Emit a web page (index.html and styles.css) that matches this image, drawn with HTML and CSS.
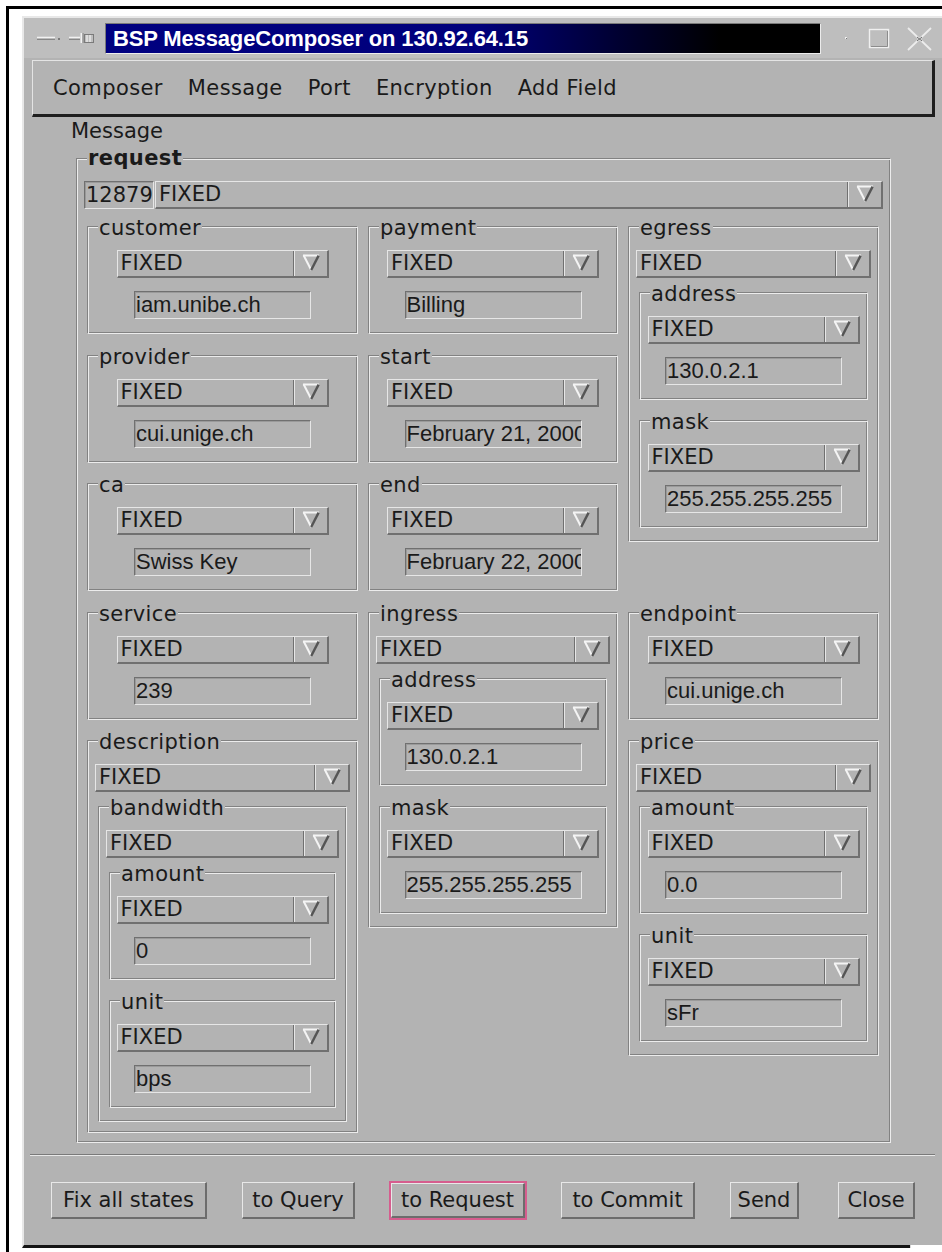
FILE: index.html
```html
<!DOCTYPE html>
<html lang="en">
<head>
<meta charset="utf-8">
<title>BSP MessageComposer</title>
<link rel="stylesheet" href="styles.css">
</head>
<body>
<svg class="defs" width="0" height="0" aria-hidden="true">
  <symbol id="arrow" viewBox="0 0 18 17">
    <path d="M1 1.5H17" stroke="#f4f4f4" stroke-width="2" fill="none"/>
    <path d="M1.6 1.2L9.2 16" stroke="#f4f4f4" stroke-width="2" fill="none"/>
    <path d="M16.6 1.6L9.2 16" stroke="#555" stroke-width="2.4" fill="none"/>
  </symbol>
</svg>
<div class="screen">
 <div class="window">
  <div class="titlebar">
   <svg class="tb-icons" width="58" height="16" viewBox="0 0 58 16">
     <path d="M0 7.5H18" stroke="#f2f2f2" stroke-width="1.6"/>
     <path d="M0 9.3H18" stroke="#7a7a7a" stroke-width="1"/>
     <rect x="21" y="8" width="2" height="2" fill="#7a7a7a"/>
     <path d="M32 7.5H43" stroke="#f2f2f2" stroke-width="1.6"/>
     <path d="M32 9.3H43" stroke="#7a7a7a" stroke-width="1"/>
     <path d="M44.5 3V13" stroke="#f2f2f2" stroke-width="2"/>
     <path d="M46 3V13" stroke="#7a7a7a" stroke-width="1"/>
     <rect x="47.5" y="4.5" width="9" height="8" fill="none" stroke="#7a7a7a" stroke-width="1"/>
     <path d="M50 5V12M53 5V12" stroke="#f2f2f2" stroke-width="1.2"/>
   </svg>
   <div class="tb-title">BSP MessageComposer on 130.92.64.15</div>
   <svg class="tb-controls" width="100" height="26" viewBox="0 0 100 26">
     <rect x="5" y="12" width="2" height="2" fill="#eeeeee"/>
     <rect x="6" y="13" width="1" height="1" fill="#777"/>
     <rect x="29.5" y="4.5" width="19" height="18" fill="none" stroke="#f0f0f0" stroke-width="1.4"/>
     <path d="M47.5 6V21.5H31" fill="none" stroke="#8c8c8c" stroke-width="1"/>
     <path d="M68 3L91 25M91 3L68 25" stroke="#ececec" stroke-width="1.8"/>
     <path d="M77 12L82 16M82 12L77 16" stroke="#6a6a6a" stroke-width="1"/>
   </svg>
  </div>

  <div class="menubar">
   <span>Composer</span>
   <span>Message</span>
   <span>Port</span>
   <span>Encryption</span>
   <span>Add Field</span>
  </div>

  <div class="panel-label">Message</div>

  <div class="group request">
   <span class="legend strong">request</span>
   <div class="req-row">
    <div class="idbox">12879</div>
    <div class="dropdown"><span class="dd-text">FIXED</span><span class="dd-btn"><svg class="arrow" viewBox="0 0 18 17"><use href="#arrow"/></svg></span></div>
   </div>

   <div class="fields-grid">
    <!-- column 1 -->
    <div class="group leaf c1 r1">
     <span class="legend">customer</span>
     <div class="dropdown"><span class="dd-text">FIXED</span><span class="dd-btn"><svg class="arrow" viewBox="0 0 18 17"><use href="#arrow"/></svg></span></div>
     <div class="field">iam.unibe.ch</div>
    </div>
    <div class="group leaf c1 r2">
     <span class="legend">provider</span>
     <div class="dropdown"><span class="dd-text">FIXED</span><span class="dd-btn"><svg class="arrow" viewBox="0 0 18 17"><use href="#arrow"/></svg></span></div>
     <div class="field">cui.unige.ch</div>
    </div>
    <div class="group leaf c1 r3">
     <span class="legend">ca</span>
     <div class="dropdown"><span class="dd-text">FIXED</span><span class="dd-btn"><svg class="arrow" viewBox="0 0 18 17"><use href="#arrow"/></svg></span></div>
     <div class="field">Swiss Key</div>
    </div>
    <div class="group leaf c1 r4">
     <span class="legend">service</span>
     <div class="dropdown"><span class="dd-text">FIXED</span><span class="dd-btn"><svg class="arrow" viewBox="0 0 18 17"><use href="#arrow"/></svg></span></div>
     <div class="field">239</div>
    </div>
    <div class="group box description c1 r5">
     <span class="legend">description</span>
     <div class="dropdown"><span class="dd-text">FIXED</span><span class="dd-btn"><svg class="arrow" viewBox="0 0 18 17"><use href="#arrow"/></svg></span></div>
     <div class="group box sub">
      <span class="legend">bandwidth</span>
      <div class="dropdown"><span class="dd-text">FIXED</span><span class="dd-btn"><svg class="arrow" viewBox="0 0 18 17"><use href="#arrow"/></svg></span></div>
      <div class="group leaf sub">
       <span class="legend">amount</span>
       <div class="dropdown"><span class="dd-text">FIXED</span><span class="dd-btn"><svg class="arrow" viewBox="0 0 18 17"><use href="#arrow"/></svg></span></div>
       <div class="field">0</div>
      </div>
      <div class="group leaf sub next">
       <span class="legend">unit</span>
       <div class="dropdown"><span class="dd-text">FIXED</span><span class="dd-btn"><svg class="arrow" viewBox="0 0 18 17"><use href="#arrow"/></svg></span></div>
       <div class="field">bps</div>
      </div>
     </div>
    </div>

    <!-- column 2 -->
    <div class="group leaf c2 r1">
     <span class="legend">payment</span>
     <div class="dropdown"><span class="dd-text">FIXED</span><span class="dd-btn"><svg class="arrow" viewBox="0 0 18 17"><use href="#arrow"/></svg></span></div>
     <div class="field">Billing</div>
    </div>
    <div class="group leaf c2 r2">
     <span class="legend">start</span>
     <div class="dropdown"><span class="dd-text">FIXED</span><span class="dd-btn"><svg class="arrow" viewBox="0 0 18 17"><use href="#arrow"/></svg></span></div>
     <div class="field">February 21, 2000</div>
    </div>
    <div class="group leaf c2 r3">
     <span class="legend">end</span>
     <div class="dropdown"><span class="dd-text">FIXED</span><span class="dd-btn"><svg class="arrow" viewBox="0 0 18 17"><use href="#arrow"/></svg></span></div>
     <div class="field">February 22, 2000</div>
    </div>
    <div class="group box c2 r4 span2">
     <span class="legend">ingress</span>
     <div class="dropdown"><span class="dd-text">FIXED</span><span class="dd-btn"><svg class="arrow" viewBox="0 0 18 17"><use href="#arrow"/></svg></span></div>
     <div class="group leaf sub">
      <span class="legend">address</span>
      <div class="dropdown"><span class="dd-text">FIXED</span><span class="dd-btn"><svg class="arrow" viewBox="0 0 18 17"><use href="#arrow"/></svg></span></div>
      <div class="field">130.0.2.1</div>
     </div>
     <div class="group leaf sub next">
      <span class="legend">mask</span>
      <div class="dropdown"><span class="dd-text">FIXED</span><span class="dd-btn"><svg class="arrow" viewBox="0 0 18 17"><use href="#arrow"/></svg></span></div>
      <div class="field">255.255.255.255</div>
     </div>
    </div>

    <!-- column 3 -->
    <div class="group box c3 r1 span3">
     <span class="legend">egress</span>
     <div class="dropdown"><span class="dd-text">FIXED</span><span class="dd-btn"><svg class="arrow" viewBox="0 0 18 17"><use href="#arrow"/></svg></span></div>
     <div class="group leaf sub">
      <span class="legend">address</span>
      <div class="dropdown"><span class="dd-text">FIXED</span><span class="dd-btn"><svg class="arrow" viewBox="0 0 18 17"><use href="#arrow"/></svg></span></div>
      <div class="field">130.0.2.1</div>
     </div>
     <div class="group leaf sub next">
      <span class="legend">mask</span>
      <div class="dropdown"><span class="dd-text">FIXED</span><span class="dd-btn"><svg class="arrow" viewBox="0 0 18 17"><use href="#arrow"/></svg></span></div>
      <div class="field">255.255.255.255</div>
     </div>
    </div>
    <div class="group leaf c3 r4">
     <span class="legend">endpoint</span>
     <div class="dropdown"><span class="dd-text">FIXED</span><span class="dd-btn"><svg class="arrow" viewBox="0 0 18 17"><use href="#arrow"/></svg></span></div>
     <div class="field">cui.unige.ch</div>
    </div>
    <div class="group box c3 r5">
     <span class="legend">price</span>
     <div class="dropdown"><span class="dd-text">FIXED</span><span class="dd-btn"><svg class="arrow" viewBox="0 0 18 17"><use href="#arrow"/></svg></span></div>
     <div class="group leaf sub">
      <span class="legend">amount</span>
      <div class="dropdown"><span class="dd-text">FIXED</span><span class="dd-btn"><svg class="arrow" viewBox="0 0 18 17"><use href="#arrow"/></svg></span></div>
      <div class="field">0.0</div>
     </div>
     <div class="group leaf sub next">
      <span class="legend">unit</span>
      <div class="dropdown"><span class="dd-text">FIXED</span><span class="dd-btn"><svg class="arrow" viewBox="0 0 18 17"><use href="#arrow"/></svg></span></div>
      <div class="field">sFr</div>
     </div>
    </div>
   </div>
  </div>

  <div class="separator"></div>

  <div class="buttons">
   <button class="btn b-fix">Fix all states</button>
   <button class="btn b-query">to Query</button>
   <div class="focus-ring"><button class="btn b-request">to Request</button></div>
   <button class="btn b-commit">to Commit</button>
   <button class="btn b-send">Send</button>
   <button class="btn b-close">Close</button>
  </div>

  <div class="corner"></div>
 </div>
</div>
</body>
</html>
```
FILE: styles.css
```css
* { box-sizing: border-box; }

html, body {
  margin: 0;
  padding: 0;
  background: #fff;
}

body {
  width: 942px;
  height: 1252px;
  overflow: hidden;
  font-family: "DejaVu Sans", "Liberation Sans", sans-serif;
  font-size: 21px;
  line-height: 24px;
  color: #1a1a1a;
}

.defs {
  position: absolute;
  width: 0;
  height: 0;
  overflow: hidden;
}

/* desktop frame edge */
.screen {
  margin: 6px 0 0 6px;
  height: 1246px;
  border-top: 3px solid #000;
  border-left: 3px solid #000;
  padding: 7px 0 0 13px;
}

.window {
  position: relative;
  width: 920px;
  height: 1232px;
  background: #b3b3b3;
  border-top: 2px solid #e8e8e8;
  border-left: 2px solid #e8e8e8;
  border-bottom: 3px solid #151515;
  display: flex;
  flex-direction: column;
}

/* ---- title bar ---- */
.titlebar {
  flex: none;
  height: 40px;
  background: #bebebe;
  display: flex;
  align-items: center;
}

.tb-icons {
  flex: none;
  margin-left: 13px;
}

.tb-title {
  flex: none;
  align-self: flex-start;
  margin: 5px 0 0 10px;
  width: 716px;
  height: 31px;
  padding-left: 7px;
  border: 1px solid;
  border-color: #7a7a7a #ececec #ececec #7a7a7a;
  background: linear-gradient(90deg, #000080 0%, #00007c 52%, #000030 72%, #000 86%, #000 100%);
  color: #fff;
  font-family: "Liberation Sans", Arial, sans-serif;
  font-weight: bold;
  font-size: 22px;
  letter-spacing: -0.15px;
  line-height: 29px;
  white-space: nowrap;
}

.tb-controls {
  flex: none;
  margin-left: 19px;
}

/* ---- menu bar ---- */
.menubar {
  flex: none;
  height: 57px;
  margin: 2px 7px 0 8px;
  padding-left: 20px;
  display: flex;
  align-items: center;
  gap: 25px;
  border-style: solid;
  border-width: 1px 3px 3px 1px;
  border-color: #e4e4e4 #1e1e1e #1e1e1e #e4e4e4;
  letter-spacing: 0.4px;
}

.panel-label {
  margin: 2px 0 0 47px;
  line-height: 24px;
}

/* ---- etched group boxes ---- */
.group {
  display: flex;
  flex-direction: column;
  border: 1px solid;
  border-color: #828282 #ececec #ececec #828282;
  box-shadow: inset 1px 1px 0 #ececec, inset -1px -1px 0 #828282;
  padding: 1px;
}

.legend {
  align-self: flex-start;
  margin: -12px 0 0 9px;
  padding: 0 1px;
  height: 24px;
  line-height: 24px;
  background: #b3b3b3;
  letter-spacing: 0.4px;
  white-space: nowrap;
}

.legend.strong {
  font-weight: bold;
  margin-top: -14px;
}

.request {
  flex: none;
  margin: 15px 0 0 52px;
  width: 815px;
  padding-bottom: 9px;
}

.req-row {
  display: flex;
  gap: 1px;
  margin: 11px 6px 0;
}

.idbox {
  flex: none;
  width: 70px;
  height: 28px;
  padding-left: 1px;
  border: 1px solid;
  border-color: #707070 #e6e6e6 #e6e6e6 #707070;
  box-shadow: inset 1px 1px 0 #999;
  line-height: 26px;
}

.req-row .dropdown {
  flex: 1;
}

.fields-grid {
  display: grid;
  grid-template-columns: 271px 250px 251px;
  column-gap: 10px;
  row-gap: 20.5px;
  align-items: start;
  margin: 17px 0 0 9px;
}

.c1 { grid-column: 1; }
.c2 { grid-column: 2; }
.c3 { grid-column: 3; }
.r1 { grid-row: 1; }
.r2 { grid-row: 2; }
.r3 { grid-row: 3; }
.r4 { grid-row: 4; }
.r5 { grid-row: 5; }
.r1.span3 { grid-row: 1 / span 3; }
.r4.span2 { grid-row: 4 / span 2; }

/* leaf: option menu plus value field */
.leaf {
  align-items: center;
  padding-bottom: 14px;
}

.leaf .legend { align-self: flex-start; }

.leaf > .dropdown {
  width: 212px;
  margin-top: 10px;
}

.field {
  width: 177px;
  height: 28px;
  margin-top: 13px;
  padding-left: 1px;
  border: 1px solid;
  border-color: #707070 #e6e6e6 #e6e6e6 #707070;
  box-shadow: inset 1px 1px 0 #9a9a9a;
  font-family: "Liberation Sans", Arial, sans-serif;
  font-size: 22px;
  line-height: 25px;
  white-space: nowrap;
  overflow: hidden;
}

/* container: option menu plus nested groups */
.box {
  padding-bottom: 13px;
}

.box > .dropdown {
  margin: 10px 6px 0;
}

.box > .sub {
  margin: 14px 9px 0;
}

.box > .sub.next {
  margin-top: 20px;
}

.description {
  padding-bottom: 10px;
}

/* ---- option menu ---- */
.dropdown {
  display: flex;
  height: 28px;
  border-style: solid;
  border-width: 1px 2px 2px 1px;
  border-color: #e6e6e6 #707070 #707070 #e6e6e6;
}

.dd-text {
  flex: 1;
  padding-left: 3px;
  border-right: 1px solid #707070;
  line-height: 25px;
  white-space: nowrap;
}

.dd-btn {
  flex: none;
  width: 33px;
  border-left: 1px solid #e6e6e6;
  display: flex;
  align-items: center;
  justify-content: center;
}

.arrow {
  width: 18px;
  height: 17px;
  margin-bottom: 2px;
}

/* ---- bottom area ---- */
.separator {
  flex: none;
  height: 2px;
  margin: 11px 7px 0 6px;
  border-top: 1px solid #7a7a7a;
  border-bottom: 1px solid #e8e8e8;
}

.buttons {
  flex: none;
  display: flex;
  align-items: flex-start;
  gap: 35px;
  margin-top: 26px;
  padding-left: 27px;
}

.btn {
  flex: none;
  display: block;
  height: 37px;
  padding: 0;
  margin: 0;
  background: #b3b3b3;
  border-style: solid;
  border-width: 1px 2px 2px 1px;
  border-color: #e8e8e8 #6c6c6c #6c6c6c #e8e8e8;
  font-family: "DejaVu Sans", sans-serif;
  font-size: 21px;
  line-height: 34px;
  color: #1a1a1a;
  text-align: center;
  white-space: nowrap;
}

.b-fix { width: 156px; }
.b-query { width: 113px; }
.b-request { width: 134px; height: 35px; line-height: 32px; }
.b-commit { width: 134px; }
.b-send { width: 69px; }
.b-close { width: 77px; margin-left: 4px; }

/* keyboard focus ring around the default action */
.focus-ring {
  flex: none;
  width: 138px;
  height: 39px;
  margin-top: -1px;
  margin-left: -1px;
  margin-right: -1px;
  border: 2px solid #d65d8e;
}

/* resize handle notch at the lower right of the frame */
.corner {
  position: absolute;
  right: 0;
  bottom: -3px;
  width: 32px;
  height: 3px;
  background: #fff;
  border-left: 1px solid #d8d8d8;
}
```
